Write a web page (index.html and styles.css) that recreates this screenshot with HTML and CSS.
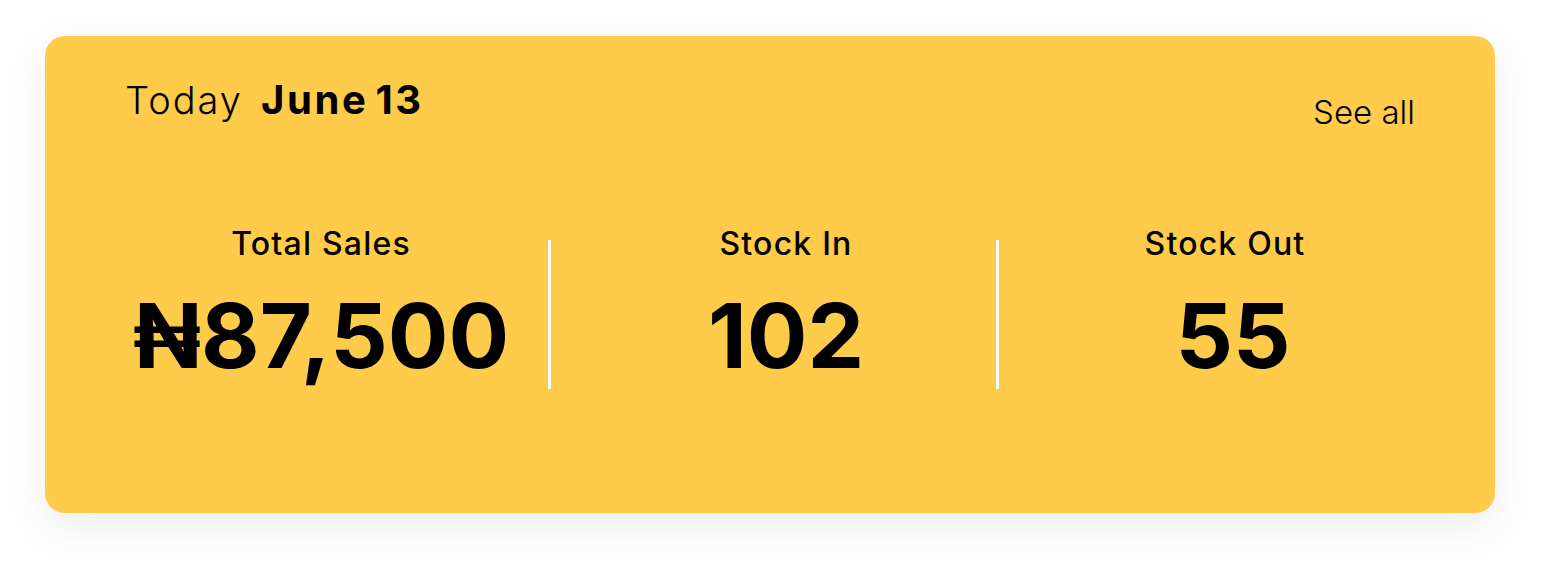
FILE: index.html
```html
<!DOCTYPE html>
<html lang="en">
<head>
<meta charset="utf-8">
<title>Today summary</title>
<link rel="stylesheet" href="styles.css">
</head>
<body>
<section class="card">
  <header class="card-header">
    <h2 class="date"><span class="date-label">Today</span><span class="date-value">June 13</span></h2>
    <a class="see-all" href="#">See all</a>
  </header>
  <div class="stats">
    <div class="stat stat-sales">
      <div class="stat-label">Total Sales</div>
      <div class="stat-value">₦87,500</div>
    </div>
    <div class="divider"></div>
    <div class="stat stat-in">
      <div class="stat-label">Stock In</div>
      <div class="stat-value">102</div>
    </div>
    <div class="divider divider-2"></div>
    <div class="stat stat-out">
      <div class="stat-label">Stock Out</div>
      <div class="stat-value stat-value-out">55</div>
    </div>
  </div>
</section>
</body>
</html>
```

FILE: styles.css
```css
html, body {
  margin: 0;
  padding: 0;
  background: #ffffff;
  min-height: 100%;
}

html {
  height: 100%;
}

body {
  box-sizing: border-box;
  height: 100%;
  font-family: "Inter", "Noto Sans", sans-serif;
  color: #000000;
  padding: 36px 0 0 45px;
}

.card {
  box-sizing: border-box;
  width: 1450px;
  height: 477px;
  padding: 42px 80px 0 80px;
  background: #fecb4b;
  border-radius: 20px;
  box-shadow: 0 14px 44px rgba(0, 0, 0, 0.08);
}

.card-header {
  display: flex;
  justify-content: space-between;
  align-items: flex-start;
}

.date {
  margin: 0;
  font-size: 38px;
  line-height: 44px;
  font-weight: 300;
  letter-spacing: 2px;
}

.date-value {
  font-size: 40px;
  font-weight: 700;
  letter-spacing: 2.6px;
  word-spacing: -5px;
  margin-left: 18px;
}

.see-all {
  margin-top: 14px;
  font-size: 33px;
  line-height: 40px;
  font-weight: 300;
  color: #000000;
  text-decoration: none;
}

.stats {
  display: flex;
  align-items: flex-start;
  margin-top: 92px;
}

.stat {
  display: flex;
  flex-direction: column;
  align-items: center;
  text-align: center;
}

.stat-label {
  font-size: 32px;
  line-height: 40px;
  font-weight: 500;
  letter-spacing: 1.2px;
}

.stat-value {
  margin-top: 26px;
  font-size: 90px;
  line-height: 92px;
  font-weight: 700;
  white-space: nowrap;
}

.stat-value-out {
  padding-left: 16px;
}

.stat-sales {
  width: 392px;
  margin-right: 31px;
}

.stat-in {
  width: 400px;
  margin-left: 35px;
  margin-right: 10px;
}

.stat-out {
  width: 380px;
  margin-left: 36px;
}

.divider {
  width: 3px;
  height: 149px;
  margin-top: 16px;
  background: #ffffff;
  flex: none;
}
```
